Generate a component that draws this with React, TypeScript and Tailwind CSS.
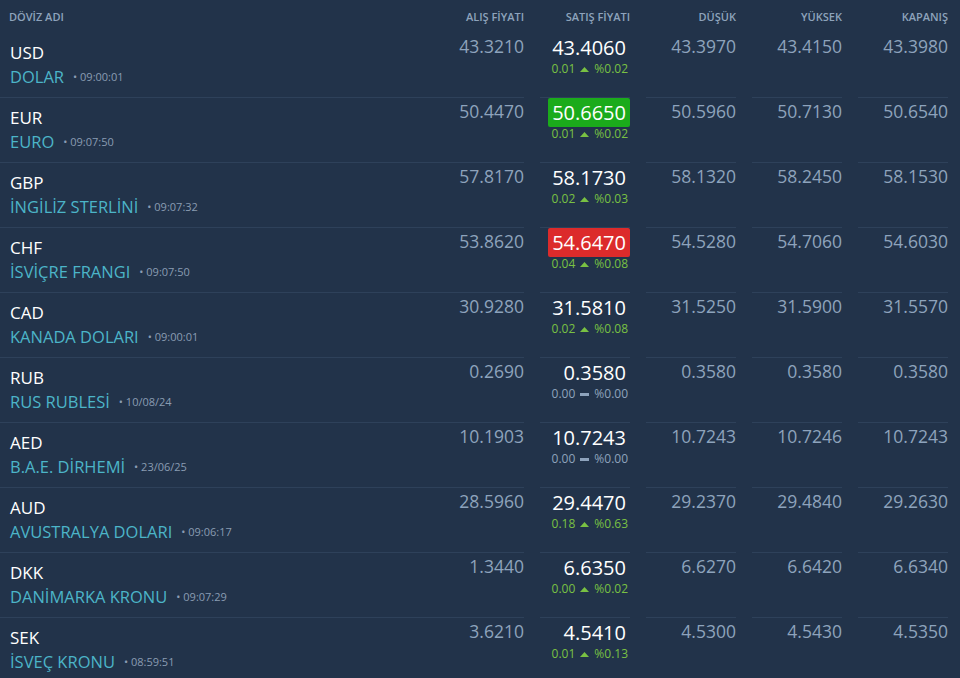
const ROWS = [
  { code: "USD", name: "DOLAR", time: "09:00:01", buy: "43.3210", sell: "43.4060", diff: "0.01", pct: "%0.02", dir: "up", low: "43.3970", high: "43.4150", close: "43.3980" },
  { code: "EUR", name: "EURO", time: "09:07:50", buy: "50.4470", sell: "50.6650", flash: "green", diff: "0.01", pct: "%0.02", dir: "up", low: "50.5960", high: "50.7130", close: "50.6540" },
  { code: "GBP", name: "İNGİLİZ STERLİNİ", time: "09:07:32", buy: "57.8170", sell: "58.1730", diff: "0.02", pct: "%0.03", dir: "up", low: "58.1320", high: "58.2450", close: "58.1530" },
  { code: "CHF", name: "İSVİÇRE FRANGI", time: "09:07:50", buy: "53.8620", sell: "54.6470", flash: "red", diff: "0.04", pct: "%0.08", dir: "up", low: "54.5280", high: "54.7060", close: "54.6030" },
  { code: "CAD", name: "KANADA DOLARI", time: "09:00:01", buy: "30.9280", sell: "31.5810", diff: "0.02", pct: "%0.08", dir: "up", low: "31.5250", high: "31.5900", close: "31.5570" },
  { code: "RUB", name: "RUS RUBLESİ", time: "10/08/24", buy: "0.2690", sell: "0.3580", diff: "0.00", pct: "%0.00", dir: "flat", low: "0.3580", high: "0.3580", close: "0.3580" },
  { code: "AED", name: "B.A.E. DİRHEMİ", time: "23/06/25", buy: "10.1903", sell: "10.7243", diff: "0.00", pct: "%0.00", dir: "flat", low: "10.7243", high: "10.7246", close: "10.7243" },
  { code: "AUD", name: "AVUSTRALYA DOLARI", time: "09:06:17", buy: "28.5960", sell: "29.4470", diff: "0.18", pct: "%0.63", dir: "up", low: "29.2370", high: "29.4840", close: "29.2630" },
  { code: "DKK", name: "DANİMARKA KRONU", time: "09:07:29", buy: "1.3440", sell: "6.6350", diff: "0.00", pct: "%0.02", dir: "up", low: "6.6270", high: "6.6420", close: "6.6340" },
  { code: "SEK", name: "İSVEÇ KRONU", time: "08:59:51", buy: "3.6210", sell: "4.5410", diff: "0.01", pct: "%0.13", dir: "up", low: "4.5300", high: "4.5430", close: "4.5350" },
];

const HEADERS = ["ALIŞ FİYATI", "SATIŞ FİYATI", "DÜŞÜK", "YÜKSEK", "KAPANIŞ"];

function Change({ diff, pct, dir }: { diff: string; pct: string; dir: string }) {
  const up = dir === "up";
  return (
    <div className={`flex items-center justify-end gap-[5px] pr-[2px] text-[12px] leading-[16px] ${up ? "text-[#79c143]" : "text-[#8ea3bc]"}`}>
      <span>{diff}</span>
      {up ? (
        <svg width="9" height="5" viewBox="0 0 9 5" className="fill-current">
          <polygon points="4.5,0 9,5 0,5" />
        </svg>
      ) : (
        <span className="inline-block h-[3px] w-[9px] bg-current" />
      )}
      <span>{pct}</span>
    </div>
  );
}

export default function App() {
  return (
    <div className="h-[678px] w-[960px] overflow-hidden bg-[#22334a] font-['Open_Sans','Noto_Sans',sans-serif]">
      <div className="grid h-[33px] grid-cols-[1fr_repeat(5,90px)] items-center gap-x-4 pr-3 pl-[9px] pt-[2px] text-[11px] font-semibold text-[#8ea3bc]">
        <div>DÖVİZ ADI</div>
        {HEADERS.map((h) => (
          <div key={h} className="text-right">
            {h}
          </div>
        ))}
      </div>

      {ROWS.map((r) => (
        <div key={r.code} className="grid grid-cols-[1fr_repeat(5,90px)] gap-x-4 pr-3">
          <div className="-mr-4 h-[65px] border-b border-[#2e415a] pt-[9px] pl-[10px]">
            <div className="text-[17px] leading-[22px] text-white">{r.code}</div>
            <div className="flex items-center pt-[1px] leading-[24px]">
              <span className="text-[16.5px] text-[#4cb5c8]">{r.name}</span>
              <span className="ml-[9px] text-[11px] text-[#8a9cb2]">• {r.time}</span>
            </div>
          </div>
          <div className="h-[65px] border-b border-[#2e415a] pt-[2px] text-right text-[17.5px] leading-[22px] text-[#8ea3bc]">
            {r.buy}
          </div>
          <div className="h-[65px] border-b border-[#2e415a] text-right">
            <div className="flex justify-end">
              <span
                className={`rounded-[2px] px-[4px] text-[20px] leading-[29px] text-white ${
                  r.flash === "green" ? "bg-[#1bab1b]" : r.flash === "red" ? "bg-[#dc2b2b]" : ""
                }`}
              >
                {r.sell}
              </span>
            </div>
            <div className="-mt-[1px]">
              <Change diff={r.diff} pct={r.pct} dir={r.dir} />
            </div>
          </div>
          {[r.low, r.high, r.close].map((v, i) => (
            <div key={i} className="h-[65px] border-b border-[#2e415a] pt-[2px] text-right text-[17.5px] leading-[22px] text-[#8ea3bc]">
              {v}
            </div>
          ))}
        </div>
      ))}
    </div>
  );
}
